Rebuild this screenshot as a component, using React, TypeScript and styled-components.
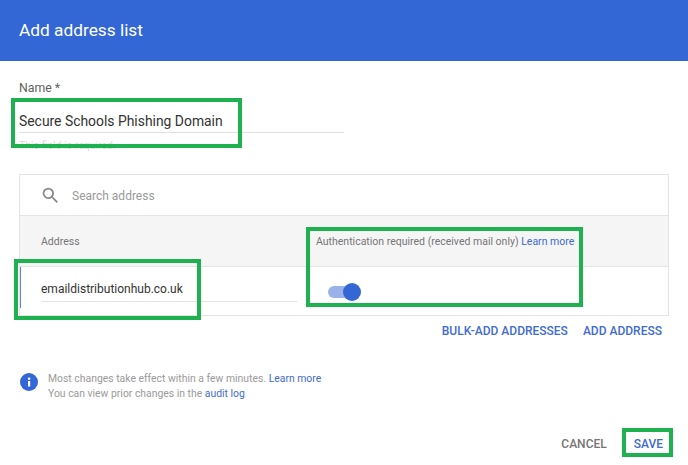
import styled, { createGlobalStyle } from 'styled-components';
import { MdSearch } from 'react-icons/md';

const GlobalStyle = createGlobalStyle`
  html, body {
    margin: 0;
    padding: 0;
    background: #fff;
    font-family: Roboto, "Liberation Sans", sans-serif;
  }
`;

const Dialog = styled.div`
  position: relative;
  width: 688px;
  height: 465px;
  overflow: hidden;
  background: #fff;
`;

const Header = styled.header`
  height: 61px;
  background: #3367d6;
  color: #fff;
  font-size: 17.3px;
  line-height: 61px;
  padding-left: 19px;
`;

const NameField = styled.section`
  width: 325px;
  margin: 19px 0 0 19px;
`;

const Label = styled.div`
  font-size: 12.3px;
  line-height: 16px;
  color: #5f5f5f;
`;

const NameValue = styled.div`
  margin-top: 15px;
  height: 21px;
  font-size: 13.9px;
  line-height: 21px;
  color: #333;
  border-bottom: 1px solid #e0e0e0;
`;

const Helper = styled.div`
  margin-top: 7px;
  font-size: 10.5px;
  line-height: 12px;
  color: #d9d9d9;
`;

const Table = styled.section`
  width: 650px;
  height: 142px;
  margin: 22px 0 0 19px;
  box-sizing: border-box;
  border: 1px solid #e4e4e4;
  display: flex;
  flex-direction: column;
`;

const SearchRow = styled.div`
  height: 40px;
  display: flex;
  align-items: center;
  gap: 11px;
  padding-left: 20px;
  border-bottom: 1px solid #e4e4e4;
  color: #9a9a9a;
  font-size: 12px;
`;

const SearchText = styled.span`
  padding-top: 2px;
`;

const HeadRow = styled.div`
  height: 50px;
  display: flex;
  background: #f5f5f5;
  border-bottom: 1px solid #e4e4e4;
  font-size: 10.5px;
  color: #757575;
`;

const BodyRow = styled.div`
  position: relative;
  flex: 1;
  display: flex;
`;

const AddressCol = styled.div<{ $top: number }>`
  width: 296px;
  padding: ${p => p.$top}px 0 0 21px;
  box-sizing: border-box;
`;

const AuthCol = styled.div`
  flex: 1;
  padding-top: 19px;
`;

const Marker = styled.div`
  position: absolute;
  left: 0;
  top: 0;
  width: 1px;
  height: 41px;
  background: #5b85e0;
`;

const AddressValue = styled.div`
  width: 256px;
  height: 20px;
  font-size: 12px;
  line-height: 16px;
  color: #333;
  border-bottom: 1px solid #e4e4e4;
`;

const Link = styled.a`
  color: #3f6bd2;
`;

const Toggle = styled.div`
  position: relative;
  width: 29px;
  height: 12px;
  margin-left: 12px;
  border-radius: 6px;
  background: #99b3ea;
`;

const Knob = styled.div`
  position: absolute;
  right: -4px;
  top: -3px;
  width: 18px;
  height: 18px;
  border-radius: 50%;
  background: #3367d6;
`;

const TableActions = styled.div`
  display: flex;
  justify-content: flex-end;
  gap: 15px;
  width: 662px;
  margin-top: 8px;
`;

const TextButton = styled.button<{ $muted?: boolean }>`
  border: 0;
  padding: 0;
  background: none;
  font-family: inherit;
  font-size: 12px;
  line-height: 14px;
  font-weight: 500;
  color: ${p => (p.$muted ? '#757575' : '#3f6bd2')};
`;

const Notice = styled.div`
  display: flex;
  gap: 10px;
  margin: 33px 0 0 20px;
  font-size: 10.4px;
  line-height: 15px;
  color: #9a9a9a;
`;

const InfoIcon = styled.svg`
  width: 18px;
  height: 18px;
  margin-top: 2px;
  flex: none;
`;

const Footer = styled.footer`
  display: flex;
  justify-content: flex-end;
  gap: 27px;
  padding-right: 25px;
  margin-top: 36px;
`;

const Highlight = styled.div<{ $x: number; $y: number; $w: number; $h: number }>`
  position: absolute;
  left: ${p => p.$x}px;
  top: ${p => p.$y}px;
  width: ${p => p.$w}px;
  height: ${p => p.$h}px;
  box-sizing: border-box;
  border: 4px solid #1fb14f;
`;

export default function App() {
  return (
    <Dialog>
      <GlobalStyle />
      <Header>Add address list</Header>
      <NameField>
        <Label>Name *</Label>
        <NameValue>Secure Schools Phishing Domain</NameValue>
        <Helper>This field is required.</Helper>
      </NameField>
      <Table>
        <SearchRow>
          <MdSearch size={21} color="#8a8a8a" />
          <SearchText>Search address</SearchText>
        </SearchRow>
        <HeadRow>
          <AddressCol $top={19}>Address</AddressCol>
          <AuthCol>
            Authentication required (received mail only) <Link>Learn more</Link>
          </AuthCol>
        </HeadRow>
        <BodyRow>
          <Marker />
          <AddressCol $top={14}>
            <AddressValue>emaildistributionhub.co.uk</AddressValue>
          </AddressCol>
          <AuthCol>
            <Toggle>
              <Knob />
            </Toggle>
          </AuthCol>
        </BodyRow>
      </Table>
      <TableActions>
        <TextButton>BULK-ADD ADDRESSES</TextButton>
        <TextButton>ADD ADDRESS</TextButton>
      </TableActions>
      <Notice>
        <InfoIcon viewBox="0 0 18 18">
          <circle cx="9" cy="9" r="9" fill="#3367d6" />
          <rect x="8" y="8" width="2.2" height="5.5" fill="#fff" />
          <rect x="8" y="4.6" width="2.2" height="2.2" fill="#fff" />
        </InfoIcon>
        <div>
          Most changes take effect within a few minutes. <Link>Learn more</Link>
          <br />
          You can view prior changes in the <Link>audit log</Link>
        </div>
      </Notice>
      <Footer>
        <TextButton $muted>CANCEL</TextButton>
        <TextButton>SAVE</TextButton>
      </Footer>
      <Highlight $x={11} $y={98} $w={231} $h={50} />
      <Highlight $x={14} $y={259} $w={187} $h={61} />
      <Highlight $x={306} $y={227} $w={277} $h={80} />
      <Highlight $x={622} $y={428} $w={51} $h={29} />
    </Dialog>
  );
}
